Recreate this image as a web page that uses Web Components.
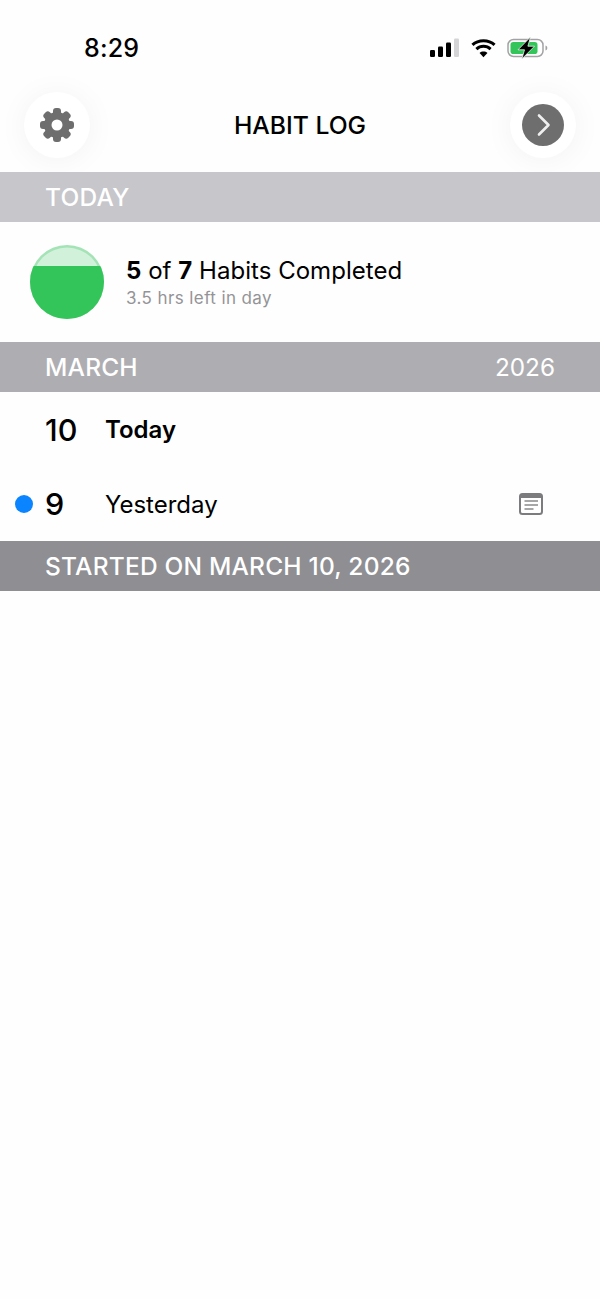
<!DOCTYPE html>
<html>
<head>
<meta charset="utf-8">
<title>Habit Log</title>
<style>
  html, body { margin: 0; padding: 0; background: #fefefe; }
  body { font-family: Inter, "Liberation Sans", sans-serif; color: #000; }
</style>
</head>
<body>
<habit-log>
  <status-bar time="8:29"></status-bar>
  <nav-bar title="HABIT LOG"></nav-bar>
  <section-band bg="#c6c6cb">TODAY</section-band>
  <habit-summary>
    <span slot="main"><b>5</b> of <b>7</b> Habits Completed</span>
    <span slot="sub">3.5 hrs left in day</span>
  </habit-summary>
  <section-band bg="#aeaeb2">MARCH<span slot="end">2026</span></section-band>
  <day-row day="10" strong>Today</day-row>
  <day-row day="9" dot note>Yesterday</day-row>
  <section-band bg="#8e8e93">STARTED ON MARCH 10, 2026</section-band>
</habit-log>

<script>
class HabitLog extends HTMLElement {
  constructor() {
    super();
    this.attachShadow({ mode: "open" }).innerHTML = `
      <style>
        :host { display: flex; flex-direction: column; width: 600px; min-height: 1299px; background: #fefefe; }
      </style>
      <slot></slot>
    `;
  }
}

class StatusBar extends HTMLElement {
  constructor() {
    super();
    this.attachShadow({ mode: "open" }).innerHTML = `
      <style>
        :host { display: flex; align-items: center; justify-content: space-between; height: 92px; box-sizing: border-box; padding: 4px 52px 0 84px; }
        .time { font-size: 25px; font-weight: 500; line-height: 30px; letter-spacing: 0.2px; }
        .icons { display: flex; align-items: center; gap: 11px; }
        svg { display: block; }
      </style>
      <span class="time"></span>
      <div class="icons">
        <svg width="30" height="20" viewBox="0 0 30 20">
          <rect x="0" y="12" width="5" height="7" rx="1.2" fill="#000"/>
          <rect x="8" y="8.500" width="5" height="10.500" rx="1.200" fill="#000"/>
          <rect x="16" y="4.500" width="5" height="14.500" rx="1.200" fill="#000"/>
          <rect x="24" y="0.500" width="5" height="18.500" rx="1.200" fill="#d4d4d6"/>
        </svg>
        <svg width="25" height="20" viewBox="0 0 26 20" fill="none" stroke="#000">
          <path d="M1.500 6.800C7.800 1 18.200 1 24.500 6.800" stroke-width="3.200"/>
          <path d="M5.600 11.200C9.800 7.200 16.200 7.200 20.400 11.200" stroke-width="3"/>
          <path d="M13 19.500L8.900 15.200C11.100 13.200 14.900 13.200 17.100 15.200Z" fill="#000" stroke="none"/>
        </svg>
        <svg width="41" height="22" viewBox="0 0 41 22">
          <rect x="1" y="2.500" width="35" height="17" rx="5.500" fill="#fff" stroke="#a2a2a4" stroke-width="1.500"/>
          <rect x="3.500" y="5" width="27" height="12" rx="2.800" fill="#34c55a"/>
          <path d="M38.500 8.500c1.400.4 1.800 1.400 1.800 2.500s-.4 2.100-1.800 2.500z" fill="#a2a2a4"/>
          <path d="M23.500 0L11 12.800h6.500L14.800 22 27.500 9.200h-6.600z" fill="#000" stroke="#e8f7ec" stroke-width="0.800"/>
        </svg>
      </div>
    `;
  }
  connectedCallback() {
    this.shadowRoot.querySelector(".time").textContent = this.getAttribute("time");
  }
}

class NavBar extends HTMLElement {
  constructor() {
    super();
    this.attachShadow({ mode: "open" }).innerHTML = `
      <style>
        :host { display: grid; grid-template-columns: 1fr auto 1fr; align-items: center; align-content: start; height: 80px; box-sizing: border-box; padding: 0 24px; }
        h1 { margin: 0; font-size: 24.700px; font-weight: 500; line-height: 30px; }
        .round { width: 66px; height: 66px; border-radius: 50%; background: #fff; box-shadow: 0 2px 30px rgba(0,0,0,.05); display: flex; align-items: center; justify-content: center; }
        .next { justify-self: end; }
        .disc { width: 42px; height: 42px; border-radius: 50%; background: #6e6e6e; display: flex; align-items: center; justify-content: center; }
        svg { display: block; }
      </style>
      <div class="round">
        <svg width="34" height="34" viewBox="0 0 34 34" fill="#6e6e6e">
          <rect x="13" y="0" width="8" height="34" rx="3"/>
          <rect x="13" y="0" width="8" height="34" rx="3" transform="rotate(45 17 17)"/>
          <rect x="13" y="0" width="8" height="34" rx="3" transform="rotate(90 17 17)"/>
          <rect x="13" y="0" width="8" height="34" rx="3" transform="rotate(135 17 17)"/>
          <circle cx="17" cy="17" r="13"/>
          <circle cx="17" cy="17" r="5.500" fill="#fff"/>
        </svg>
      </div>
      <h1></h1>
      <div class="round next">
        <div class="disc">
          <svg width="18" height="26" viewBox="0 0 18 26" fill="none" stroke="#efefef" stroke-width="2.600" stroke-linecap="round" stroke-linejoin="round">
            <path d="M5 3.500l9.500 9.500L5 22.500"/>
          </svg>
        </div>
      </div>
    `;
  }
  connectedCallback() {
    this.shadowRoot.querySelector("h1").textContent = this.getAttribute("title");
  }
}

class SectionBand extends HTMLElement {
  constructor() {
    super();
    this.attachShadow({ mode: "open" }).innerHTML = `
      <style>
        :host { display: flex; align-items: center; justify-content: space-between; height: 50px; box-sizing: border-box; padding: 0 45px; color: #fff; font-size: 24.500px; letter-spacing: 0.2px; font-weight: 500; background: var(--band, #aeaeb2); }
        ::slotted([slot="end"]) { font-weight: 400; font-size: 24.300px; letter-spacing: 0; }
      </style>
      <span><slot></slot></span>
      <slot name="end"></slot>
    `;
  }
  connectedCallback() {
    this.style.setProperty("--band", this.getAttribute("bg"));
  }
}

class HabitSummary extends HTMLElement {
  constructor() {
    super();
    this.attachShadow({ mode: "open" }).innerHTML = `
      <style>
        :host { display: flex; align-items: center; gap: 22px; height: 120px; box-sizing: border-box; padding: 0 30px; }
        svg { display: block; flex: none; }
        .text { display: flex; flex-direction: column; gap: 1px; padding-top: 1px; }
        .main { font-size: 24px; line-height: 30px; letter-spacing: 0.03px; }
        .sub { font-size: 17px; line-height: 22px; letter-spacing: 0.4px; color: #949498; }
        ::slotted(span) { display: block; }
      </style>
      <svg width="74" height="74" viewBox="0 0 74 74">
        <defs><clipPath id="ball"><circle cx="37" cy="37" r="37"/></clipPath></defs>
        <circle cx="37" cy="37" r="37" fill="#a4e3b6"/>
        <circle cx="37" cy="37" r="34.500" fill="#d1f1da"/>
        <rect x="0" y="21" width="74" height="53" fill="#34c55a" clip-path="url(#ball)"/>
      </svg>
      <div class="text">
        <div class="main"><slot name="main"></slot></div>
        <div class="sub"><slot name="sub"></slot></div>
      </div>
    `;
  }
}

class DayRow extends HTMLElement {
  constructor() {
    super();
    this.attachShadow({ mode: "open" }).innerHTML = `
      <style>
        :host { display: grid; grid-template-columns: 60px 1fr auto; align-items: center; height: 74.500px; box-sizing: border-box; padding: 1px 57px 0 45px; position: relative; }
        .num { font-size: 30.500px; font-weight: 500; line-height: 36px; }
        .label { font-size: 24px; line-height: 30px; padding-top: 1px; }
        :host([strong]) .label { font-weight: 600; }
        .dot { display: none; position: absolute; left: 15px; top: 50%; margin-top: -9px; width: 18px; height: 18px; border-radius: 50%; background: #0a84ff; }
        :host([dot]) .dot { display: block; }
        svg { display: none; }
        :host([note]) svg { display: block; }
      </style>
      <span class="dot"></span>
      <span class="num"></span>
      <span class="label"><slot></slot></span>
      <svg width="24" height="22" viewBox="0 0 24 22">
        <rect x="1" y="1" width="22" height="20" rx="2.500" fill="#fff" stroke="#7c7c7e" stroke-width="2"/>
        <path d="M1 5V3.500A2.500 2.500 0 0 1 3.500 1h17A2.500 2.500 0 0 1 23 3.500V5z" fill="#7c7c7e"/>
        <path d="M5.500 8h13.500M5.500 12h13.500M5.500 16h9" stroke="#8a8a8c" stroke-width="1.600" fill="none"/>
      </svg>
    `;
  }
  connectedCallback() {
    this.shadowRoot.querySelector(".num").textContent = this.getAttribute("day");
  }
}

customElements.define("habit-log", HabitLog);
customElements.define("status-bar", StatusBar);
customElements.define("nav-bar", NavBar);
customElements.define("section-band", SectionBand);
customElements.define("habit-summary", HabitSummary);
customElements.define("day-row", DayRow);
</script>
</body>
</html>
